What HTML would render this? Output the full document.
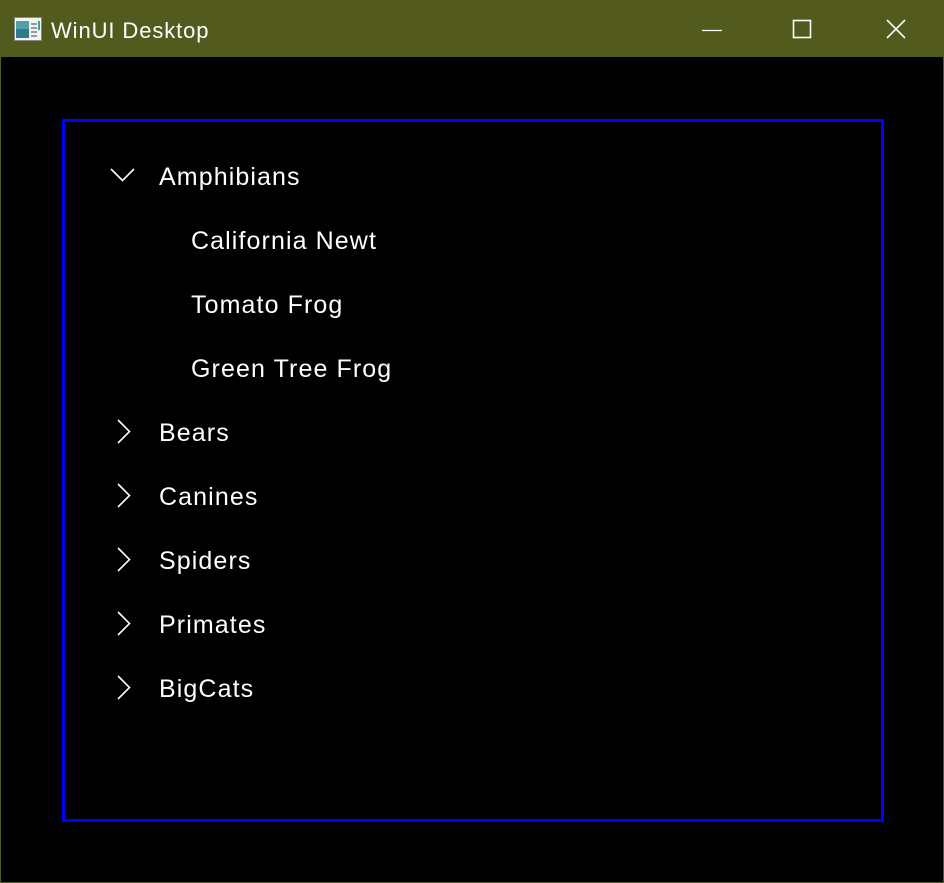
<!DOCTYPE html>
<html><head><style>
body{margin:0;width:944px;height:883px;background:#000;overflow:hidden;font-family:"Liberation Sans",sans-serif;position:relative}
.win{position:absolute;left:0;top:0;width:942px;height:881px;border:1px solid #525a1e}
.tb{position:absolute;left:0;top:0;width:944px;height:57px;background:#525a1e}
.title{position:absolute;left:51px;top:18px;color:#fff;font-size:22px;letter-spacing:0.9px}
.box{position:absolute;left:62px;top:119px;width:816px;height:697px;border:3px solid #0000ff}
.t{position:absolute;color:#fff;font-size:25px;line-height:30px;letter-spacing:1.1px}
svg{position:absolute}
</style></head><body>
<div class="win"></div>
<div class="tb"></div>
<svg style="left:14px;top:17px" width="28" height="24" viewBox="0 0 28 24"><rect x="0.5" y="0.5" width="27" height="23" fill="#f4f4f4" stroke="#888"/><rect x="2" y="4" width="13" height="17" fill="#2e7b8a"/><rect x="2" y="4" width="13" height="8" fill="#4fa0a8"/><rect x="17" y="6" width="6" height="2" fill="#999"/><rect x="17" y="10" width="6" height="2" fill="#999"/><rect x="17" y="14" width="6" height="2" fill="#999"/><rect x="17" y="18" width="6" height="2" fill="#999"/><rect x="24" y="4" width="2" height="9" fill="#3a8"/></svg>
<div class="title">WinUI Desktop</div>
<svg style="left:702px;top:20px" width="20" height="20"><line x1="0" y1="10.5" x2="20" y2="10.5" stroke="#fff" stroke-width="1.3"/></svg>
<svg style="left:792px;top:19px" width="20" height="20"><rect x="1.5" y="1.5" width="17" height="17" fill="none" stroke="#fff" stroke-width="1.6"/></svg>
<svg style="left:886px;top:19px" width="20" height="20"><path d="M1 1L19 19M19 1L1 19" stroke="#fff" stroke-width="1.6"/></svg>
<div class="box"></div>
<svg style="left:110px;top:166px" width="26" height="18"><path d="M1 3L12.5 14.5L24 3" fill="none" stroke="#fff" stroke-width="1.6"/></svg>
<div class="t" style="left:159px;top:162px">Amphibians</div>
<div class="t" style="left:191px;top:226px">California Newt</div>
<div class="t" style="left:191px;top:290px">Tomato Frog</div>
<div class="t" style="left:191px;top:354px">Green Tree Frog</div>
<svg style="left:114px;top:419px" width="18" height="26"><path d="M4 1L15.5 12.5L4 24" fill="none" stroke="#fff" stroke-width="1.6"/></svg>
<div class="t" style="left:159px;top:418px">Bears</div>
<svg style="left:114px;top:483px" width="18" height="26"><path d="M4 1L15.5 12.5L4 24" fill="none" stroke="#fff" stroke-width="1.6"/></svg>
<div class="t" style="left:159px;top:482px">Canines</div>
<svg style="left:114px;top:547px" width="18" height="26"><path d="M4 1L15.5 12.5L4 24" fill="none" stroke="#fff" stroke-width="1.6"/></svg>
<div class="t" style="left:159px;top:546px">Spiders</div>
<svg style="left:114px;top:611px" width="18" height="26"><path d="M4 1L15.5 12.5L4 24" fill="none" stroke="#fff" stroke-width="1.6"/></svg>
<div class="t" style="left:159px;top:610px">Primates</div>
<svg style="left:114px;top:675px" width="18" height="26"><path d="M4 1L15.5 12.5L4 24" fill="none" stroke="#fff" stroke-width="1.6"/></svg>
<div class="t" style="left:159px;top:674px">BigCats</div>
</body></html>
